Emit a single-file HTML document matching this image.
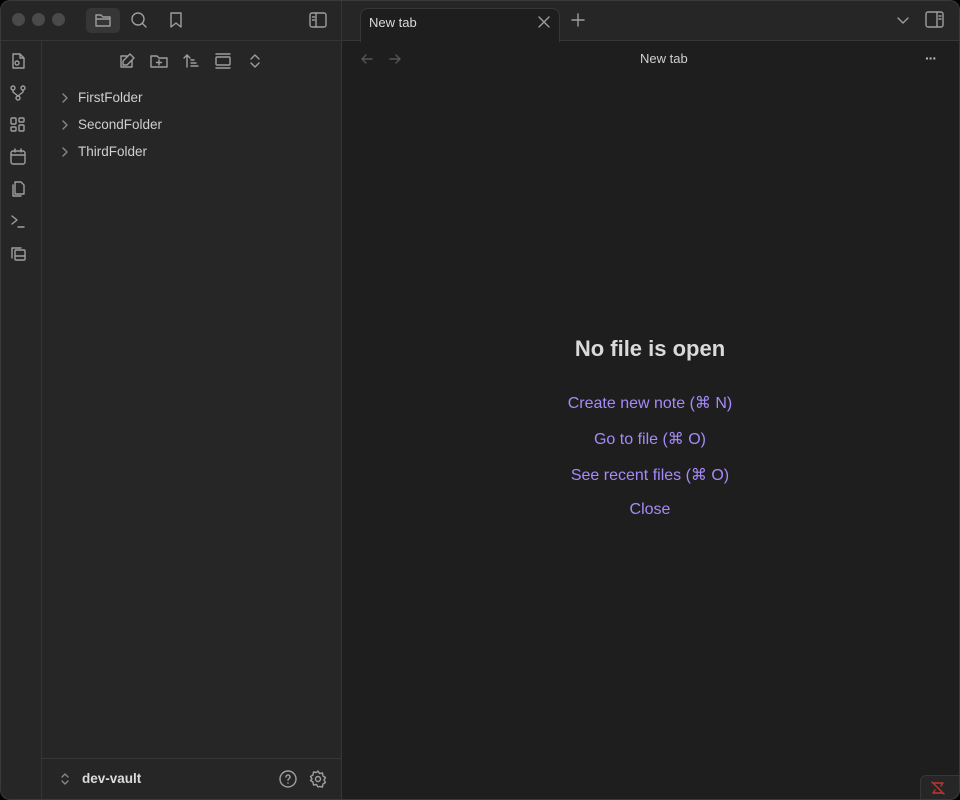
<!DOCTYPE html>
<html><head><style>
*{box-sizing:border-box;margin:0;padding:0}
body{width:960px;height:800px;background:#000;font-family:"Liberation Sans",sans-serif;overflow:hidden;position:relative}
.win{position:absolute;inset:0;background:#1e1e1e;border-radius:10px;overflow:hidden}
.sh{position:absolute;inset:0;transform:translateY(1px)}
.frame{position:absolute;inset:0;border-radius:10px;box-shadow:inset 0 0 0 1px #3a3a3a;pointer-events:none}
.left{position:absolute;left:0;top:-1px;width:342px;height:802px;background:#262626;border-right:1px solid #363636}
.top{position:absolute;left:0;top:0;width:342px;height:40px;border-bottom:1px solid #363636}
.ribbon{position:absolute;left:0;top:40px;width:42px;height:760px;border-right:1px solid #363636}
.dot{position:absolute;top:12px;width:13px;height:13px;border-radius:50%;background:#4a4a4a}
svg{position:absolute;fill:none;stroke:#9e9e9e;stroke-width:1.4;stroke-linecap:round;stroke-linejoin:round}
.item{position:absolute;left:78px;color:#cfcfcf;font-size:13.5px}
.chev{position:absolute;left:60px;stroke:#888}
.tabbar{position:absolute;left:342px;top:-1px;right:0;height:41px;background:#262626;border-bottom:1px solid #363636}
.tab{position:absolute;left:360px;top:7px;width:200px;height:34px;background:#1e1e1e;border-radius:8px 8px 0 0;border:1px solid #363636;border-bottom:none}
.link{position:absolute;left:340px;right:0;text-align:center;color:#a68af9;font-size:16px}
</style></head><body><div class="win"><div class="sh">
<div class="left"></div>
<div class="top"></div>
<div class="ribbon"></div>
<div class="dot" style="left:12px"></div><div class="dot" style="left:32px"></div><div class="dot" style="left:52px"></div>
<div style="position:absolute;left:86px;top:7px;width:34px;height:25px;background:#363636;border-radius:5px"></div>
<svg style="left:93px;top:9px" width="20" height="20" viewBox="0 0 20 20"><path d="M3 5h5l2 2h7v9H3z M3 9h14"/></svg>
<svg style="left:129px;top:9px" width="20" height="20" viewBox="0 0 20 20"><circle cx="9" cy="9" r="6"/><path d="M13.5 13.5L17 17"/></svg>
<svg style="left:166px;top:9px" width="20" height="20" viewBox="0 0 20 20"><path d="M5 3h10v14l-5-4-5 4z"/></svg>
<svg style="left:308px;top:9px" width="20" height="20" viewBox="0 0 20 20"><rect x="2" y="3" width="16" height="14" rx="2"/><path d="M8 3v14M4.5 7h2M4.5 10h2"/></svg>
<svg style="left:8px;top:50px" width="20" height="20" viewBox="0 0 20 20"><path d="M5 3h7l4 4v10H5zM12 3v4h4"/><circle cx="9" cy="12" r="2"/></svg>
<svg style="left:8px;top:82px" width="20" height="20" viewBox="0 0 20 20"><circle cx="5" cy="5" r="2"/><circle cx="15" cy="5" r="2"/><circle cx="10" cy="15" r="2"/><path d="M5 7v2l5 4M15 7v2l-5 4"/></svg>
<svg style="left:8px;top:114px" width="20" height="20" viewBox="0 0 20 20"><rect x="3" y="3" width="5" height="6" rx="1"/><rect x="11" y="3" width="5" height="4" rx="1"/><rect x="3" y="12" width="5" height="4" rx="1"/><rect x="11" y="10" width="5" height="6" rx="1"/></svg>
<svg style="left:8px;top:146px" width="20" height="20" viewBox="0 0 20 20"><rect x="3" y="4" width="14" height="13" rx="2"/><path d="M3 8h14M7 2v3M13 2v3"/></svg>
<svg style="left:8px;top:178px" width="20" height="20" viewBox="0 0 20 20"><path d="M7 3h6l3 3v9H7zM5 6v11h8"/></svg>
<svg style="left:8px;top:210px" width="20" height="20" viewBox="0 0 20 20"><path d="M4 5l5 4-5 4M10 16h6"/></svg>
<svg style="left:8px;top:242px" width="20" height="20" viewBox="0 0 20 20"><path d="M4 15V5h9"/><rect x="7" y="7" width="10" height="10" rx="1"/><path d="M7 13h10"/></svg>
<svg style="left:117px;top:50px" width="20" height="20" viewBox="0 0 20 20"><path d="M15 10v6H4V5h6M13 3l4 4-7 7H6v-4z"/></svg>
<svg style="left:149px;top:50px" width="20" height="20" viewBox="0 0 20 20"><path d="M2 5h6l2 2h8v9H2zM10 9v5M7.5 11.5h5"/></svg>
<svg style="left:181px;top:50px" width="20" height="20" viewBox="0 0 20 20"><path d="M6 16V4M3 7l3-3 3 3M10 9h3M10 12h5M10 15h7"/></svg>
<svg style="left:213px;top:50px" width="20" height="20" viewBox="0 0 20 20"><path d="M3 3h14M3 17h14"/><rect x="3" y="6" width="14" height="8" rx="1"/></svg>
<svg style="left:245px;top:50px" width="20" height="20" viewBox="0 0 20 20"><path d="M6 8l4-4 4 4M6 12l4 4 4-4"/></svg>
<svg class="chev" style="top:90px" width="10" height="14" viewBox="0 0 10 14"><path d="M3 3l4 4-4 4"/></svg>
<svg class="chev" style="top:117px" width="10" height="14" viewBox="0 0 10 14"><path d="M3 3l4 4-4 4"/></svg>
<svg class="chev" style="top:144px" width="10" height="14" viewBox="0 0 10 14"><path d="M3 3l4 4-4 4"/></svg>
<div class="item" style="top:89px">FirstFolder</div>
<div class="item" style="top:116px">SecondFolder</div>
<div class="item" style="top:143px">ThirdFolder</div>
<div style="position:absolute;left:42px;top:757px;width:300px;border-top:1px solid #363636"></div>
<svg style="left:58px;top:770px;stroke:#888" width="14" height="16" viewBox="0 0 14 16"><path d="M4 6l3-3 3 3M4 10l3 3 3-3"/></svg>
<div style="position:absolute;left:82px;top:770px;color:#dcdcdc;font-size:13.5px;font-weight:bold">dev-vault</div>
<svg style="left:278px;top:768px" width="20" height="20" viewBox="0 0 20 20"><circle cx="10" cy="10" r="8"/><path d="M8 8a2 2 0 1 1 3 1.7c-.7.4-1 .8-1 1.5M10 14v.2"/></svg>
<svg style="left:308px;top:768px" width="20" height="20" viewBox="0 0 20 20"><circle cx="10" cy="10" r="2.5"/><path d="M10 2l1.5 2.5 3-.5.5 3 2.5 1.5-1.5 2.5 1.5 2.5-2.5 1.5-.5 3-3-.5L10 18l-1.5-2.5-3 .5-.5-3L2.5 11.5 4 10 2.5 7.5 5 6l.5-3 3 .5z"/></svg>
<div class="tabbar"></div>
<div class="tab"></div>
<div style="position:absolute;left:369px;top:14px;color:#dadada;font-size:13px">New tab</div>
<svg style="left:537px;top:14px" width="14" height="14" viewBox="0 0 14 14"><path d="M2 2l10 10M12 2L2 12"/></svg>
<svg style="left:570px;top:11px" width="16" height="16" viewBox="0 0 16 16"><path d="M8 2v12M2 8h12"/></svg>
<svg style="left:895px;top:12px" width="16" height="14" viewBox="0 0 16 14"><path d="M3 5l5 5 5-5"/></svg>
<svg style="left:924px;top:9px" width="22" height="20" viewBox="0 0 22 20"><rect x="2" y="2" width="17" height="15" rx="2"/><path d="M13 2v15M15 6h2M15 9h2"/></svg>
<svg style="left:359px;top:50px;stroke:#555" width="16" height="16" viewBox="0 0 16 16"><path d="M13 8H3M7 4L3 8l4 4"/></svg>
<svg style="left:387px;top:50px;stroke:#555" width="16" height="16" viewBox="0 0 16 16"><path d="M3 8h10M9 4l4 4-4 4"/></svg>
<div style="position:absolute;left:640px;top:50px;color:#cfcfcf;font-size:13px">New tab</div>
<div style="position:absolute;left:925px;top:49px;color:#bbb;font-size:14px;letter-spacing:-1px;font-weight:bold">···</div>
<div style="position:absolute;left:340px;right:0;top:335px;text-align:center;color:#dadada;font-size:22px;font-weight:bold">No file is open</div>
<div class="link" style="top:392px">Create new note (⌘ N)</div>
<div class="link" style="top:428px">Go to file (⌘ O)</div>
<div class="link" style="top:464px">See recent files (⌘ O)</div>
<div class="link" style="top:500px">Close</div>
<div style="position:absolute;left:920px;top:774px;width:40px;height:26px;background:#262626;border-radius:6px 0 0 0;border:1px solid #363636"></div>
<svg style="left:929px;top:778px;stroke:#c03535" width="18" height="18" viewBox="0 0 18 18"><path d="M3 3l12 12M5 4h9l-2 3M13 14H4l2-3"/></svg>
</div>
<div class="frame"></div>
</div></body></html>
